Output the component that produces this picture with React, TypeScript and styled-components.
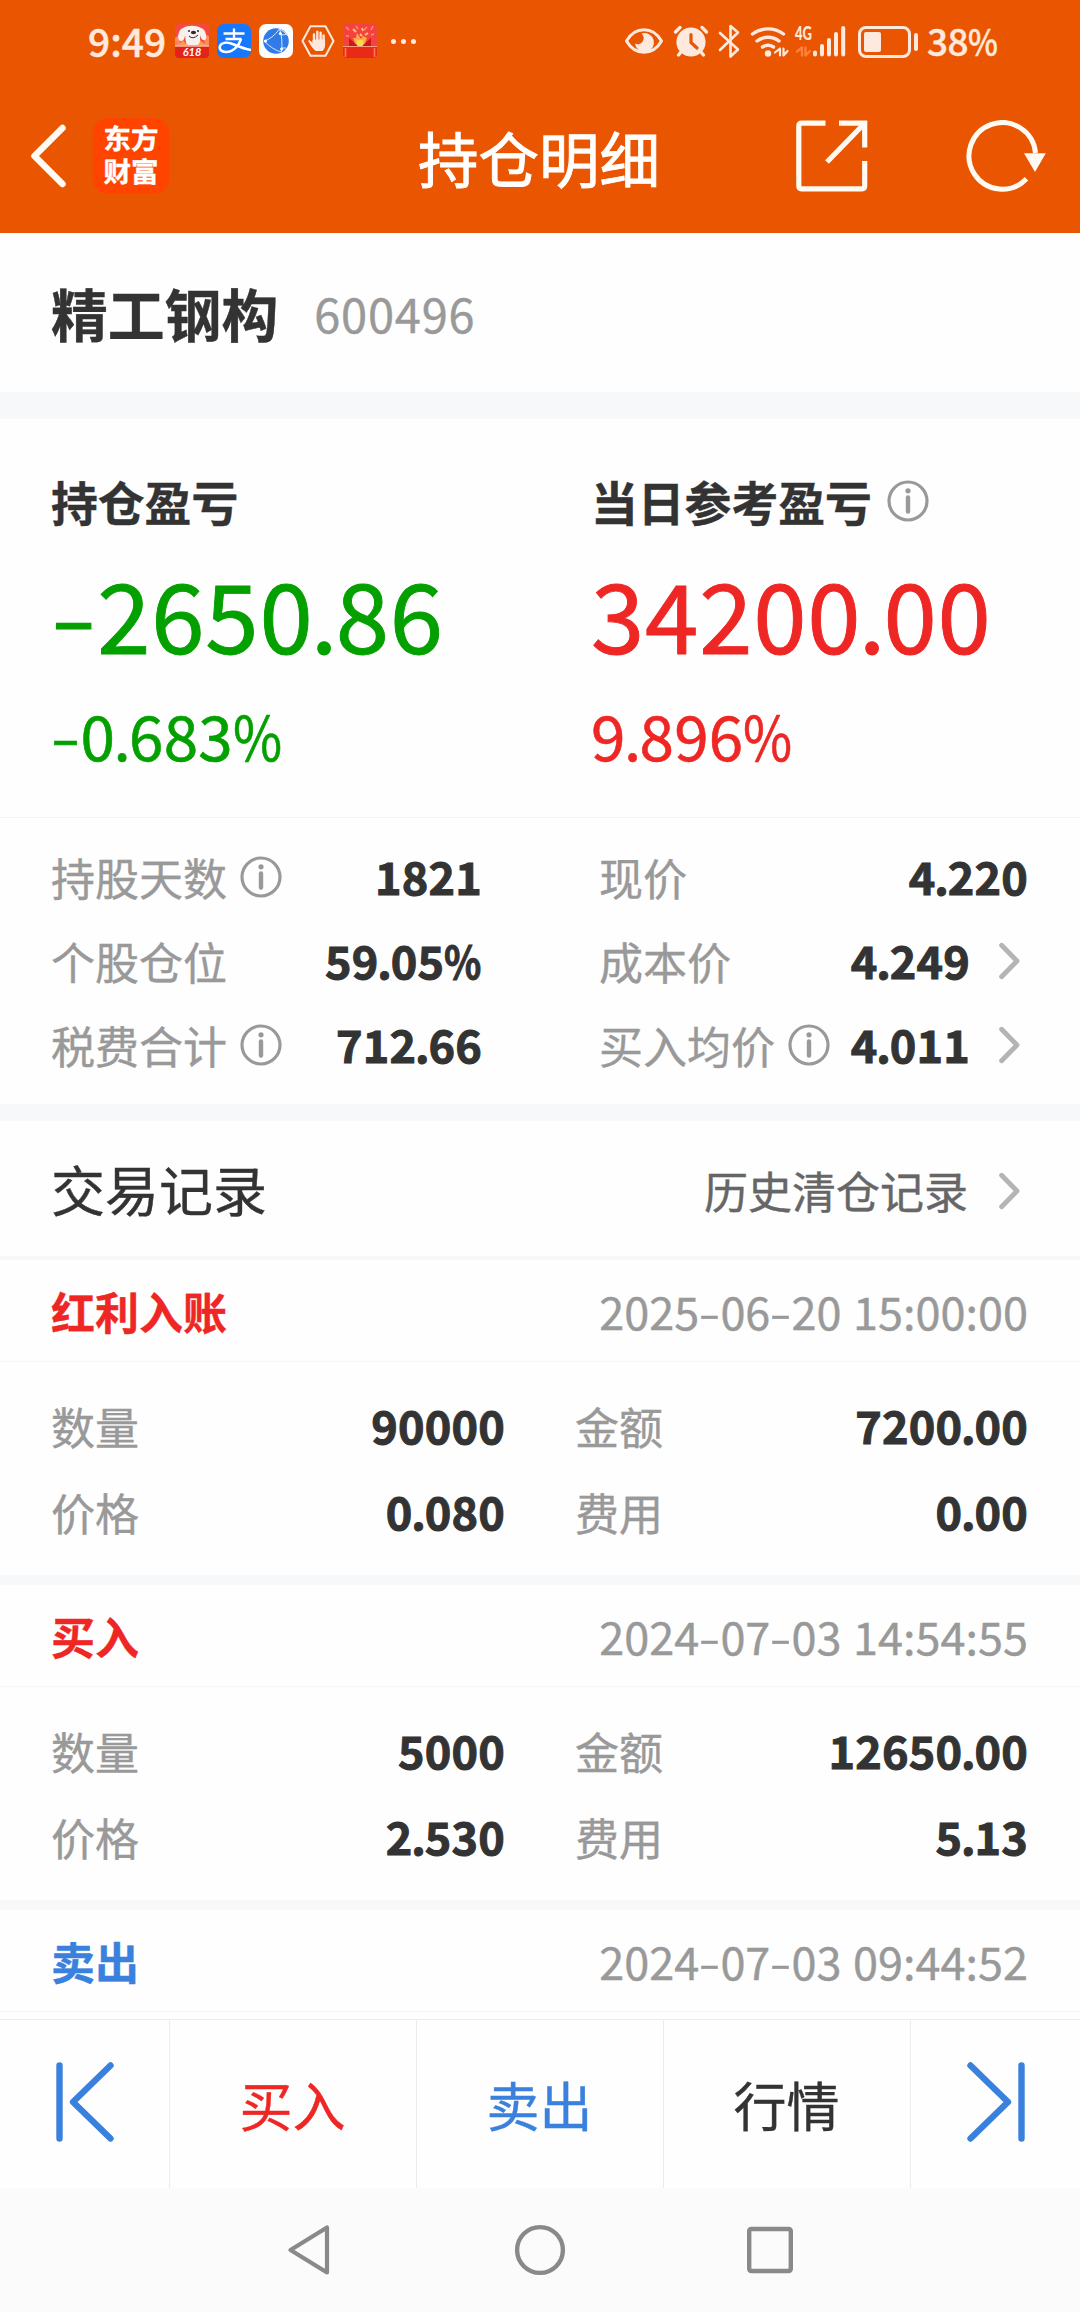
import React from "react";
import styled, { createGlobalStyle } from "styled-components";

const GlobalStyle = createGlobalStyle`
  * { box-sizing: border-box; }
  body { margin: 0; background: #fefefe; }
`;

const INK = "#333333";
const MUTED = "#999999";
const RED = "#ee2624";
const GREEN = "#04a000";
const BLUE = "#3a81dd";
const BAND = "#f6f8fa";
const PALE = "#fde9dd";
const DIGITS = `"Noto Sans CJK SC", sans-serif`;

const Screen = styled.div`
  width: 1080px;
  height: 2312px;
  display: flex;
  flex-direction: column;
  overflow: hidden;
  background: #fefefe;
  color: ${INK};
  font-family: Lato, "Noto Sans CJK SC", sans-serif;
  font-size: 44px;
  line-height: 1;
  white-space: nowrap;
  -webkit-text-stroke: 0.4px currentColor;
`;

const Band = styled.div<{ $h: number }>`
  flex: none;
  height: ${(p) => p.$h}px;
  background: ${BAND};
`;

/* ---------- numerals ---------- */
const Minus = styled.span`
  display: inline-block;
  font-family: Inter, sans-serif;
  font-weight: 300;
  line-height: 0;
  margin-right: 0.02em;
  transform: translate(0.01em, 0.02em) scaleX(1.18);
`;

const Point = styled.span`
  margin: 0 -0.028em;
`;

const PercentSign = styled.span`
  display: inline-block;
  line-height: 0;
  transform: scaleX(0.86);
  transform-origin: left;
  margin-right: -0.13em;
`;

const Num = ({ children }: { children: string }) => (
  <>
    {children.split(/([-.%])/).map((part, i) => {
      if (part === "-") return <Minus key={i}>-</Minus>;
      if (part === ".") return <Point key={i}>.</Point>;
      if (part === "%") return <PercentSign key={i}>%</PercentSign>;
      return part;
    })}
  </>
);

/* ---------- header ---------- */
const Header = styled.header`
  flex: none;
  height: 233px;
  background: #ea5502;
  color: #fff;
`;

const StatusBar = styled.div`
  height: 82px;
  padding: 0 84px 0 88px;
  display: flex;
  align-items: center;
  justify-content: space-between;
  color: ${PALE};
`;

const StatusGroup = styled.div`
  display: flex;
  align-items: center;
`;

const Clock = styled.span`
  width: 87px;
  font-family: ${DIGITS};
  font-weight: 500;
  font-size: 39px;
  padding-bottom: 2px;
`;

const AppIcons = styled.div`
  display: flex;
  gap: 8px;
`;

const Dots = styled.div`
  display: flex;
  gap: 5px;
  margin-left: 14px;
  span {
    width: 5px;
    height: 5px;
    border-radius: 50%;
    background: ${PALE};
  }
`;

const Percent = styled.span`
  font-family: ${DIGITS};
  font-weight: 500;
  font-size: 37px;
  width: 69px;
  margin-left: 8px;
  padding-bottom: 1px;
  letter-spacing: -0.5px;
`;

const Battery = styled.div`
  position: relative;
  width: 53px;
  height: 32px;
  margin: 2px 8px 0 12px;
  border: 3px solid ${PALE};
  border-radius: 8px;
  padding: 3px;
  &::after {
    content: "";
    position: absolute;
    right: -10px;
    top: 4px;
    width: 4px;
    height: 18px;
    border-radius: 2px;
    background: ${PALE};
  }
`;

const Charge = styled.div`
  width: 17px;
  height: 20px;
  border-radius: 2px;
  background: ${PALE};
`;

const TitleBar = styled.div`
  height: 151px;
  display: grid;
  grid-template-columns: 418px 1fr 420px;
  align-items: center;
  padding-bottom: 3px;
`;

const TitleLeft = styled.div`
  display: flex;
  align-items: center;
  gap: 26px;
  padding-left: 30px;
`;

const Brand = styled.div`
  width: 76px;
  height: 76px;
  border-radius: 15px;
  background: #ff4400;
  display: grid;
  place-content: center;
  padding-bottom: 2px;
  font-size: 27.5px;
  font-weight: 700;
  line-height: 33px;
`;

const Title = styled.h1`
  margin: 0;
  padding-top: 9px;
  font-size: 60.5px;
  font-weight: 400;
  text-align: center;
  -webkit-text-stroke: 0.9px currentColor;
`;

const TitleRight = styled.div`
  display: flex;
  justify-content: flex-end;
  align-items: center;
  gap: 98px;
  padding-right: 33px;
`;

/* ---------- stock ---------- */
const StockRow = styled.section`
  flex: none;
  height: 159px;
  padding: 5px 51px 0;
  display: flex;
  align-items: center;
`;

const StockName = styled.span`
  font-size: 56.8px;
  font-weight: 700;
`;

const StockCode = styled.span`
  margin-left: 36px;
  padding-bottom: 5px;
  font-family: ${DIGITS};
  font-size: 47px;
  color: ${MUTED};
  letter-spacing: 0.8px;
`;

/* ---------- profit ---------- */
const Profit = styled.section`
  flex: none;
  height: 399px;
  padding: 58px 0 0 51px;
  display: grid;
  grid-template-columns: 540px 1fr;
  border-bottom: 1px solid #f3f4f6;
`;

const ProfitCol = styled.div<{ $tone: string }>`
  display: flex;
  flex-direction: column;
  color: ${(p) => p.$tone};
`;

const ProfitLabel = styled.div`
  height: 52px;
  display: flex;
  align-items: center;
  gap: 15px;
  color: ${INK};
  font-size: 46.8px;
  font-weight: 700;
`;

const ProfitValue = styled.div`
  height: 100px;
  margin-top: 34px;
  font-family: ${DIGITS};
  font-size: 96px;
  line-height: 100px;
  letter-spacing: 0.8px;
  -webkit-text-stroke: 0.9px currentColor;
`;

const ProfitRate = styled.div`
  height: 64px;
  margin-top: 39px;
  font-family: ${DIGITS};
  font-size: 62px;
  line-height: 64px;
  letter-spacing: 0.2px;
  -webkit-text-stroke: 0.6px currentColor;
`;

/* ---------- details ---------- */
const Details = styled.section`
  flex: none;
  height: 286px;
  padding: 19px 52px 0 51px;
  display: grid;
  grid-template-columns: 431px 429px;
  grid-auto-rows: 84px;
  column-gap: 117px;
`;

const Cell = styled.div`
  display: flex;
  align-items: center;
`;

const Label = styled.span`
  color: ${MUTED};
  margin-right: 13px;
`;

const Value = styled.span`
  margin-left: auto;
  padding-bottom: 7px;
  font-family: ${DIGITS};
  font-size: 45px;
  font-weight: 700;
  letter-spacing: 0.2px;
  -webkit-text-stroke: 1px currentColor;
`;

const ChevronBox = styled.span`
  display: flex;
  margin: -4px 8px 0 29px;
`;

const InfoBox = styled.span`
  display: flex;
  margin-top: -4px;
`;

/* ---------- records ---------- */
const RecordsHead = styled.section`
  flex: none;
  height: 135px;
  padding: 7px 52px 0 51px;
  display: flex;
  align-items: center;
  justify-content: space-between;
`;

const RecordsTitle = styled.span`
  font-size: 54px;
`;

const HistoryLink = styled.span`
  display: flex;
  align-items: center;
  color: #666;
  ${ChevronBox} { margin: -3px 8px 0 31px; }
`;

const RecordTop = styled.div`
  flex: none;
  height: 102px;
  padding: 4px 52px 0 51px;
  display: flex;
  align-items: center;
  justify-content: space-between;
  border-bottom: 1px solid #f5f6f8;
`;

const Kind = styled.span<{ $tone: string }>`
  font-weight: 700;
  color: ${(p) => p.$tone};
`;

const Time = styled.span`
  padding-bottom: 4px;
  font-family: ${DIGITS};
  font-size: 45px;
  color: ${MUTED};
  word-spacing: 1.5px;
`;

const RecordBody = styled.div`
  flex: none;
  height: 213px;
  padding: 23px 52px 0 51px;
  display: grid;
  grid-template-columns: 454px 453px;
  grid-auto-rows: 86px;
  column-gap: 70px;
`;

/* ---------- bottom ---------- */
const ActionBar = styled.nav`
  flex: none;
  height: 169px;
  margin-top: auto;
  display: grid;
  grid-template-columns: 170px 247px 247px 247px 169px;
  border-top: 1px solid #ececec;
  background: #fefefe;
`;

const Action = styled.div<{ $tone?: string }>`
  display: flex;
  align-items: center;
  justify-content: center;
  padding: 5px 1px 0 0;
  font-size: 53px;
  color: ${(p) => p.$tone || INK};
  border-right: 1px solid #ececec;
  &:last-child { border-right: 0; }
  svg { margin: -9px 0 0 2px; }
`;

const SystemNav = styled.div`
  flex: none;
  height: 124px;
  background: #fbfbfb;
  display: flex;
  align-items: center;
  justify-content: center;
  gap: 181px;
`;

const List = styled.main`
  flex: 1;
  min-height: 0;
  overflow: hidden;
  display: flex;
  flex-direction: column;
`;

const Info = () => (
  <InfoBox>
    <svg width="42" height="42" viewBox="0 0 42 42" fill="none" stroke="#999">
      <circle cx="21" cy="21" r="19" strokeWidth="3.2" />
      <circle cx="21" cy="10.8" r="2.6" fill="#999" stroke="none" />
      <path d="M21 17.5V31.5" strokeWidth="4.4" strokeLinecap="round" />
    </svg>
  </InfoBox>
);

const Chevron = () => (
  <ChevronBox>
    <svg width="21" height="38" viewBox="0 0 21 38" fill="none" stroke="#b4b4b4" strokeWidth="4.8" strokeLinecap="round" strokeLinejoin="round">
      <path d="M2.6 3.2L18 19L2.6 34.8" />
    </svg>
  </ChevronBox>
);

const JdIcon = () => (
  <svg width="34" height="34" viewBox="0 0 34 34">
    <rect width="34" height="34" rx="4" fill="#f5493f" />
    <path d="M0 14L7 9L4 22H0ZM34 12L28 10L30 22H34Z" fill="#ff8a62" />
    <path d="M4 20l4-4 3 4 4-3 5 3 5-4 6 5v3H3z" fill="#ff9a4a" />
    <path d="M8 4C4 5 2 12 4 16C7 19 10 15 10 11C11 16 10 21 14 21H22C26 20 25 15 25 11C26 15 28 18 31 15C32 11 30 5 26 4C21 1 13 1 8 4Z" fill="#f6f1ee" />
    <ellipse cx="18.5" cy="8.5" rx="2.6" ry="1.7" fill="#3a2424" />
    <circle cx="14" cy="7" r="1" fill="#3a2424" />
    <circle cx="23" cy="7" r="1" fill="#3a2424" />
    <path d="M14 12Q18 16 23 11" fill="none" stroke="#3a2424" strokeWidth="1" />
    <path d="M0 22H34V30A4 4 0 0 1 30 34H4A4 4 0 0 1 0 30Z" fill="#e2231a" />
    <path d="M0 22H34" stroke="#ffb19c" strokeWidth="1.4" />
    <text x="17" y="32.4" textAnchor="middle" fontFamily="Lato, sans-serif" fontSize="11" fontStyle="italic" fontWeight="700" fill="#fff">618</text>
  </svg>
);

const AlipayIcon = () => (
  <svg width="34" height="34" viewBox="0 0 34 34" fill="none">
    <rect width="34" height="34" rx="7" fill="#1677ff" />
    <g stroke="#fff" strokeWidth="2.3">
      <path d="M6.5 9.5H27.5M17 4.5V15M8.5 15H24.5" />
      <path d="M24 15C22 22 16 28 9 28C4 28 2 25 3 22C5 18 11 18 17 20.5C23 23 28 25 34 26" strokeWidth="2.6" />
    </g>
  </svg>
);

const BrowserIcon = () => (
  <svg width="34" height="34" viewBox="0 0 34 34" fill="none">
    <rect width="34" height="34" rx="7" fill="#fff" />
    <circle cx="17" cy="17" r="12.8" fill="#2f7be8" />
    <g stroke="#d5e7ff" strokeWidth="1">
      <path d="M5 17Q13 15 20.5 5Q24 14 22.5 28Q14 26 5 17" />
      <path d="M20.5 5Q25 7 29 12M22 11Q26 11 29 9.5M22.5 24H27" />
    </g>
    <g fill="#fff">
      <circle cx="21.3" cy="9.5" r="1.5" />
      <circle cx="6.5" cy="17" r="1.5" />
      <circle cx="22.7" cy="25" r="1.6" />
    </g>
  </svg>
);

const BlockIcon = () => (
  <svg width="34" height="34" viewBox="0 0 34 34" fill="none" stroke={PALE} strokeLinecap="round" strokeLinejoin="round">
    <path d="M9.5 2.2H24.5L32.5 17L24.5 31.8H9.5L1.5 17Z" strokeWidth="2" />
    <path d="M13 18V10.5M16.3 16V7.8M19.6 16V8.6M22.6 18V11.5" strokeWidth="2.4" />
    <path d="M8.2 16.5L12 19.5V16H23.6V21Q23.4 25 21.5 26.5H14.5Q11.5 24 8 17.5Z" fill={PALE} strokeWidth="1" />
  </svg>
);

const GiftIcon = () => (
  <svg width="34" height="34" viewBox="0 0 34 34">
    <rect width="34" height="34" rx="4" fill="#f4423e" />
    <path d="M3 3L6 6M30 2L28 6M24 3L21 6M13 2L15 5M31 10L28 11M3 12L6 12" stroke="#ff8f78" strokeWidth="1.5" />
    <path d="M10 14L13 22H21L24 14L20 12L18 15L14 9L13 14Z" fill="#ffac45" />
    <path d="M6 14L15 22H6ZM28 14L19 22H28Z" fill="#c81b1b" />
    <path d="M10 5L13 8M19 4L20 7M25 9L22 11M17 10L19 12" stroke="#ffc27a" strokeWidth="2" />
    <circle cx="17" cy="19" r="3.4" fill="#ffd84d" />
    <path d="M0 22H34V30A4 4 0 0 1 30 34H4A4 4 0 0 1 0 30Z" fill="#e92a17" />
    <path d="M0 22.5H34" stroke="#ff9c85" strokeWidth="1.2" />
    <path d="M2.5 24V33M31.5 24V33" stroke="#ff7a5a" strokeWidth="1.6" />
  </svg>
);

const StatusIcons = () => (
  <svg width="222" height="36" viewBox="624 22 222 36" fill="none" stroke={PALE} strokeLinecap="round" strokeLinejoin="round">
    <path d="M626.5 40C635 25 653 25 661.5 40C653 55 635 55 626.5 40Z" strokeWidth="3" />
    <path d="M641.5 32.5A9.5 9.5 0 1 1 635 42.5A6 6 0 0 0 641.5 32.5Z" fill={PALE} stroke="none" />
    <circle cx="691" cy="41" r="14.6" fill={PALE} stroke="none" />
    <path d="M675.5 31L680 26.5M706.5 31L702 26.5M681 51L678.5 54M701 51L703.5 54" strokeWidth="3.4" />
    <path d="M691 33.5V41.5L697 47" stroke="#ea5502" strokeWidth="3.2" />
    <path d="M720 32L738 48.5L730.5 55.5V25L738 31.5L720 49" strokeWidth="2.6" />
    <g strokeWidth="3.4">
      <path d="M752.5 33A26 26 0 0 1 783.5 33" />
      <path d="M757 40A18 18 0 0 1 779 40" />
      <path d="M762.5 46A10.5 10.5 0 0 1 773.5 46" />
    </g>
    <circle cx="768" cy="52.5" r="3.2" fill={PALE} stroke="none" />
    <path d="M775 51.5L780 47.5V54.5M783.5 47.5V54.5L787.5 50" strokeWidth="2.2" />
    <path d="M797 50.5L802 46.5V54.5M805.5 46.5V54.5L810 50" stroke="#ff7f3d" strokeWidth="2.4" />
    <path d="M815 51.5V53.5M822 45V53.5M829 39V53.5M836 33V53.5M843.2 27V53.5" strokeWidth="4" />
    <text x="795" y="38.5" fontFamily="Lato, sans-serif" fontSize="18" fontWeight="900" fill={PALE} stroke="none" textLength="17" lengthAdjust="spacingAndGlyphs">4G</text>
  </svg>
);

const BackIcon = () => (
  <svg width="37" height="64" viewBox="0 0 37 64" fill="none" stroke="#fffaf2" strokeWidth="6.5" strokeLinecap="round" strokeLinejoin="round">
    <path d="M32.5 4L4.5 32L32.5 60" />
  </svg>
);

const ShareIcon = () => (
  <svg width="72" height="72" viewBox="0 0 72 72" fill="none" stroke="#fffaf2" strokeWidth="5.2" strokeLinejoin="round">
    <path d="M29.5 3.2H5.5Q2.8 3.2 2.8 6V66Q2.8 68.8 5.5 68.8H66Q68.7 68.8 68.7 66V41" />
    <path d="M43 3.2H68.7V27.5" strokeLinejoin="miter" />
    <path d="M67 5L31 42" />
  </svg>
);

const RefreshIcon = () => (
  <svg width="81" height="72" viewBox="0 0 81 72" fill="none">
    <path d="M69.5 33A33.3 33.3 0 1 0 60.5 58.8" stroke="#fffaf2" strokeWidth="5" />
    <path d="M58 33.2H79.8L69 52Z" fill="#fffaf2" />
  </svg>
);

const Edge = ({ flip }: { flip?: boolean }) => (
  <svg width="58" height="80" viewBox="0 0 58 80" fill="none" stroke={BLUE} strokeWidth="6.4" strokeLinecap="round" strokeLinejoin="round">
    <path d={flip ? "M54.5 3.5V76.5M3.5 3.5L41 40L3.5 76.5" : "M3.5 3.5V76.5M54.5 3.5L17 40L54.5 76.5"} />
  </svg>
);

type Item = { label: string; value: string; info?: boolean; link?: boolean };

const details: Item[] = [
  { label: "持股天数", value: "1821", info: true },
  { label: "现价", value: "4.220" },
  { label: "个股仓位", value: "59.05%" },
  { label: "成本价", value: "4.249", link: true },
  { label: "税费合计", value: "712.66", info: true },
  { label: "买入均价", value: "4.011", info: true, link: true },
];

type RecordData = { kind: string; tone: string; time: string; items: Item[] };

const records: RecordData[] = [
  {
    kind: "红利入账", tone: RED, time: "2025-06-20 15:00:00",
    items: [
      { label: "数量", value: "90000" }, { label: "金额", value: "7200.00" },
      { label: "价格", value: "0.080" }, { label: "费用", value: "0.00" },
    ],
  },
  {
    kind: "买入", tone: RED, time: "2024-07-03 14:54:55",
    items: [
      { label: "数量", value: "5000" }, { label: "金额", value: "12650.00" },
      { label: "价格", value: "2.530" }, { label: "费用", value: "5.13" },
    ],
  },
  { kind: "卖出", tone: BLUE, time: "2024-07-03 09:44:52", items: [] },
];

const Pair = ({ item }: { item: Item }) => (
  <Cell>
    <Label>{item.label}</Label>
    {item.info && <Info />}
    <Value><Num>{item.value}</Num></Value>
    {item.link && <Chevron />}
  </Cell>
);

export default function App() {
  return (
    <Screen>
      <GlobalStyle />
      <Header>
        <StatusBar>
          <StatusGroup>
            <Clock>9:49</Clock>
            <AppIcons>
              <JdIcon />
              <AlipayIcon />
              <BrowserIcon />
              <BlockIcon />
              <GiftIcon />
            </AppIcons>
            <Dots><span /><span /><span /></Dots>
          </StatusGroup>
          <StatusGroup>
            <StatusIcons />
            <Battery><Charge /></Battery>
            <Percent><Num>38%</Num></Percent>
          </StatusGroup>
        </StatusBar>
        <TitleBar>
          <TitleLeft>
            <BackIcon />
            <Brand><span>东方</span><span>财富</span></Brand>
          </TitleLeft>
          <Title>持仓明细</Title>
          <TitleRight>
            <ShareIcon />
            <RefreshIcon />
          </TitleRight>
        </TitleBar>
      </Header>
      <List>
        <StockRow>
          <StockName>精工钢构</StockName>
          <StockCode>600496</StockCode>
        </StockRow>
        <Band $h={27} />
        <Profit>
          <ProfitCol $tone={GREEN}>
            <ProfitLabel>持仓盈亏</ProfitLabel>
            <ProfitValue><Num>-2650.86</Num></ProfitValue>
            <ProfitRate><Num>-0.683%</Num></ProfitRate>
          </ProfitCol>
          <ProfitCol $tone={RED}>
            <ProfitLabel>当日参考盈亏<Info /></ProfitLabel>
            <ProfitValue><Num>34200.00</Num></ProfitValue>
            <ProfitRate><Num>9.896%</Num></ProfitRate>
          </ProfitCol>
        </Profit>
        <Details>
          {details.map((d) => <Pair key={d.label} item={d} />)}
        </Details>
        <Band $h={17} />
        <RecordsHead>
          <RecordsTitle>交易记录</RecordsTitle>
          <HistoryLink>历史清仓记录<Chevron /></HistoryLink>
        </RecordsHead>
        <Band $h={4} />
        {records.map((r) => (
          <React.Fragment key={r.time}>
            <RecordTop>
              <Kind $tone={r.tone}>{r.kind}</Kind>
              <Time><Num>{r.time}</Num></Time>
            </RecordTop>
            {r.items.length > 0 && (
              <>
                <RecordBody>
                  {r.items.map((i) => <Pair key={i.label} item={i} />)}
                </RecordBody>
                <Band $h={10} />
              </>
            )}
          </React.Fragment>
        ))}
      </List>
      <ActionBar>
        <Action><Edge /></Action>
        <Action $tone={RED}>买入</Action>
        <Action $tone={BLUE}>卖出</Action>
        <Action>行情</Action>
        <Action><Edge flip /></Action>
      </ActionBar>
      <SystemNav>
        <svg width="46" height="52" viewBox="0 0 46 52" fill="none" stroke="#898989" strokeWidth="4.2" strokeLinejoin="round">
          <path d="M40 3.5V48.5L3.5 26Z" />
        </svg>
        <svg width="52" height="52" viewBox="0 0 52 52" fill="none" stroke="#898989" strokeWidth="4.4">
          <circle cx="26" cy="26" r="22.9" />
        </svg>
        <svg width="46" height="48" viewBox="0 0 46 48" fill="none" stroke="#898989" strokeWidth="4.4">
          <rect x="2.2" y="3" width="41.6" height="42" rx="2" />
        </svg>
      </SystemNav>
    </Screen>
  );
}
